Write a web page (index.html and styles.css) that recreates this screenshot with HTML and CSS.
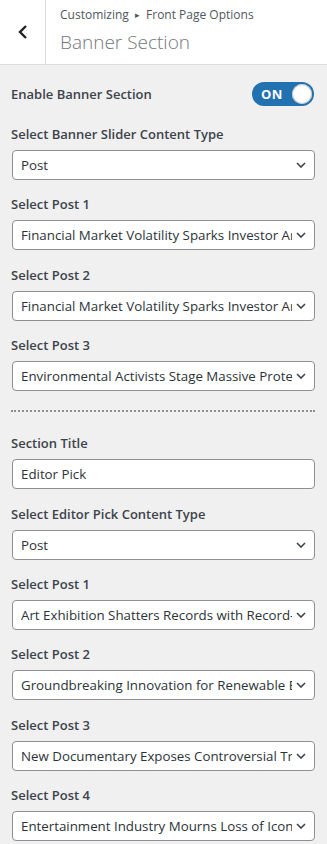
FILE: index.html
```html
<!DOCTYPE html>
<html lang="en">
<head>
    <meta charset="UTF-8">
    <meta name="viewport" content="width=device-width, initial-scale=1.0">
    <title>Banner Section</title>
    <link rel="stylesheet" href="styles.css">
</head>
<body>
    <div class="header">
        <button class="back" type="button" aria-label="Back">
            <svg width="12" height="16" viewBox="0 0 12 16"><path d="M9 2 L3 8 L9 14" fill="none" stroke="#1d2327" stroke-width="2.4"/></svg>
        </button>
        <div class="titles">
            <div class="crumbs">Customizing <span class="arrow">&#9656;</span> Front Page Options</div>
            <div class="title">Banner Section</div>
        </div>
    </div>

    <div class="panel">
        <div class="toggle-row">
            <span class="label">Enable Banner Section</span>
            <span class="toggle"><span class="on">ON</span><span class="knob"></span></span>
        </div>

        <div class="control">
            <div class="label">Select Banner Slider Content Type</div>
            <div class="select"><span class="value">Post</span><svg class="chev" width="10" height="6" viewBox="0 0 10 6"><path d="M1 1 L5 5 L9 1" fill="none" stroke="#3c434a" stroke-width="1.6"/></svg></div>
        </div>

        <div class="control">
            <div class="label">Select Post 1</div>
            <div class="select"><span class="value">Financial Market Volatility Sparks Investor Anxiety</span><svg class="chev" width="10" height="6" viewBox="0 0 10 6"><path d="M1 1 L5 5 L9 1" fill="none" stroke="#3c434a" stroke-width="1.6"/></svg></div>
        </div>

        <div class="control">
            <div class="label">Select Post 2</div>
            <div class="select"><span class="value">Financial Market Volatility Sparks Investor Anxiety</span><svg class="chev" width="10" height="6" viewBox="0 0 10 6"><path d="M1 1 L5 5 L9 1" fill="none" stroke="#3c434a" stroke-width="1.6"/></svg></div>
        </div>

        <div class="control">
            <div class="label">Select Post 3</div>
            <div class="select"><span class="value">Environmental Activists Stage Massive Protest</span><svg class="chev" width="10" height="6" viewBox="0 0 10 6"><path d="M1 1 L5 5 L9 1" fill="none" stroke="#3c434a" stroke-width="1.6"/></svg></div>
        </div>

        <hr class="sep">

        <div class="control">
            <div class="label">Section Title</div>
            <div class="input">Editor Pick</div>
        </div>

        <div class="control">
            <div class="label">Select Editor Pick Content Type</div>
            <div class="select"><span class="value">Post</span><svg class="chev" width="10" height="6" viewBox="0 0 10 6"><path d="M1 1 L5 5 L9 1" fill="none" stroke="#3c434a" stroke-width="1.6"/></svg></div>
        </div>

        <div class="control">
            <div class="label">Select Post 1</div>
            <div class="select"><span class="value">Art Exhibition Shatters Records with Record-Breaking Sales</span><svg class="chev" width="10" height="6" viewBox="0 0 10 6"><path d="M1 1 L5 5 L9 1" fill="none" stroke="#3c434a" stroke-width="1.6"/></svg></div>
        </div>

        <div class="control">
            <div class="label">Select Post 2</div>
            <div class="select"><span class="value">Groundbreaking Innovation for Renewable Energy</span><svg class="chev" width="10" height="6" viewBox="0 0 10 6"><path d="M1 1 L5 5 L9 1" fill="none" stroke="#3c434a" stroke-width="1.6"/></svg></div>
        </div>

        <div class="control">
            <div class="label">Select Post 3</div>
            <div class="select"><span class="value">New Documentary Exposes Controversial Truths</span><svg class="chev" width="10" height="6" viewBox="0 0 10 6"><path d="M1 1 L5 5 L9 1" fill="none" stroke="#3c434a" stroke-width="1.6"/></svg></div>
        </div>

        <div class="control">
            <div class="label">Select Post 4</div>
            <div class="select"><span class="value">Entertainment Industry Mourns Loss of Icon</span><svg class="chev" width="10" height="6" viewBox="0 0 10 6"><path d="M1 1 L5 5 L9 1" fill="none" stroke="#3c434a" stroke-width="1.6"/></svg></div>
        </div>
    </div>
</body>
</html>
```

FILE: styles.css
```css
body {
    margin: 0;
    font-family: "Open Sans", "Noto Sans", sans-serif;
    background-color: #f0f0f1;
    color: #2c3338;
}

.header {
    display: flex;
    height: 64px;
    background-color: #fff;
    border-bottom: 1px solid #dcdcde;
}

.back {
    width: 46px;
    padding: 0;
    border: none;
    border-right: 1px solid #dcdcde;
    background: #fff;
    display: flex;
    align-items: center;
    justify-content: center;
}

.titles {
    padding: 5px 0 0 14px;
}

.crumbs {
    font-size: 12px;
    line-height: 20px;
    color: #50575e;
}

.arrow {
    font-size: 9px;
    margin: 0 3px;
    position: relative;
    top: -1px;
}

.title {
    font-size: 19px;
    font-weight: 300;
    line-height: 32px;
    color: #72777c;
}

.panel {
    padding: 17px 12px 12px 11px;
}

.label {
    font-size: 13px;
    font-weight: 600;
    line-height: 20px;
    color: #3c434a;
}

.toggle-row {
    display: flex;
    align-items: center;
    justify-content: space-between;
    height: 24px;
    margin-bottom: 18px;
}

.toggle {
    display: flex;
    align-items: center;
    justify-content: space-between;
    width: 62px;
    height: 24px;
    margin-right: 1px;
    padding: 0 2px 0 9px;
    box-sizing: border-box;
    background-color: #2271b1;
    border-radius: 12px;
}

.on {
    color: #fff;
    font-size: 13px;
    font-weight: 700;
    letter-spacing: 0.3px;
}

.knob {
    width: 20px;
    height: 20px;
    border-radius: 50%;
    background-color: #fff;
    box-shadow: inset 0 0 0 1px #c3c4c7;
}

.control {
    margin-bottom: 14.4px;
}

.control .label {
    margin-bottom: 6px;
}

.select,
.input {
    display: flex;
    align-items: center;
    height: 30px;
    margin-left: 1px;
    box-sizing: border-box;
    background-color: #fff;
    border: 1px solid #8c8f94;
    border-radius: 4px;
    font-size: 13.3px;
    color: #2c3338;
}

.select {
    padding: 0 8px 0 8px;
}

.input {
    padding: 0 8px;
}

.value {
    flex: 1;
    overflow: hidden;
    white-space: nowrap;
}

.chev {
    flex: none;
    margin-left: 4px;
}

.sep {
    margin: 19px 0 21px 0;
    border: none;
    border-top: 2px dotted #8c8f94;
    height: 0;
}
```
